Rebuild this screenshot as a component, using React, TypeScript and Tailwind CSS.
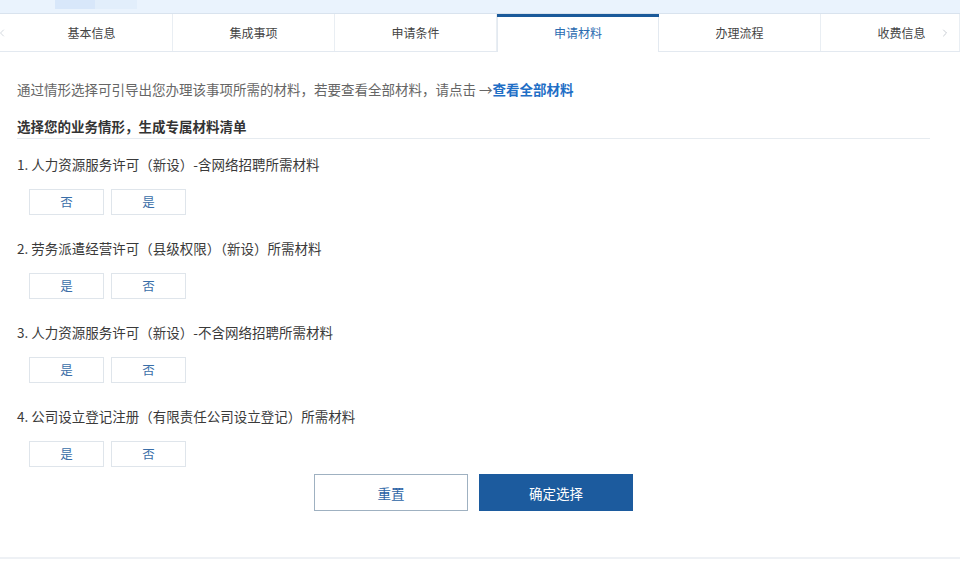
import { ChevronLeft, ChevronRight } from "lucide-react";

const tabs = ["基本信息", "集成事项", "申请条件", "申请材料", "办理流程", "收费信息"];
const activeTab = 3;

const items: { title: string; options: [string, string] }[] = [
  { title: "1. 人力资源服务许可（新设）-含网络招聘所需材料", options: ["否", "是"] },
  { title: "2. 劳务派遣经营许可（县级权限）（新设）所需材料", options: ["是", "否"] },
  { title: "3. 人力资源服务许可（新设）-不含网络招聘所需材料", options: ["是", "否"] },
  { title: "4. 公司设立登记注册（有限责任公司设立登记）所需材料", options: ["是", "否"] },
];

function TabBar() {
  return (
    <div className="flex h-[38px] border-b border-[#e3e9f0] bg-white">
      <div className="flex w-[11px] shrink-0 items-center overflow-hidden text-[#c4cbd3]">
        <ChevronLeft className="-ml-1 h-3 w-3 shrink-0" strokeWidth={1.5} />
      </div>
      {tabs.map((t, i) => {
        const active = i === activeTab;
        const last = i === tabs.length - 1;
        return (
          <div
            key={t}
            className={`relative flex items-center justify-center text-[12px] ${
              last ? "min-w-0 flex-1 pl-[23px]" : "w-[162px] shrink-0"
            } ${
              active
                ? "-mb-px border-x border-[#e3e9f0] bg-white text-[#2a6bb0]"
                : "border-r border-[#e9eef3] text-[#444]"
            }`}
          >
            {active && <div className="absolute -left-px -right-px top-0 h-[3px] bg-[#1b5a9a]" />}
            {t}
            {last && (
              <ChevronRight
                className="absolute right-[8px] top-1/2 h-3 w-3 -translate-y-1/2 text-[#b5bcc4]"
                strokeWidth={1.5}
              />
            )}
          </div>
        );
      })}
    </div>
  );
}

function Choice({ label }: { label: string }) {
  return (
    <button className="h-[26px] w-[75px] border border-[#dfe5eb] bg-white text-[12.5px] text-[#3a6ea8]">
      {label}
    </button>
  );
}

export default function App() {
  return (
    <div className="h-[570px] w-[960px] overflow-hidden bg-white font-['Noto_Sans_CJK_SC','Liberation_Sans',sans-serif]">
      <div className="flex h-[14px] border-b border-[#d9e3ee] bg-[#eaf3fd]">
        <div className="ml-[55px] h-[9px] w-[40px] bg-[#d8e7fa]" />
        <div className="h-[9px] w-[42px] bg-[#e2eefb]" />
      </div>
      <TabBar />
      <div className="px-[17px] text-[13.5px] leading-[20px]">
        <p className="mt-[27px] text-[#666]">
          通过情形选择可引导出您办理该事项所需的材料，若要查看全部材料，请点击 →
          <span className="font-bold text-[#1f6fc6]">查看全部材料</span>
        </p>
        <div className="mt-[17px] w-[913px] border-b border-[#e6ebf0] pb-[2px] font-bold text-[#333]">
          选择您的业务情形，生成专属材料清单
        </div>
        {items.map((it, i) => (
          <div key={it.title} className={i === 0 ? "mt-[15px]" : "mt-[23px]"}>
            <div className="text-[#3a3a3a]">{it.title}</div>
            <div className="mt-[15px] ml-[12px] flex gap-[7px]">
              <Choice label={it.options[0]} />
              <Choice label={it.options[1]} />
            </div>
          </div>
        ))}
        <div className="mt-[7px] flex w-[913px] justify-center gap-[11px]">
          <button className="h-[37px] w-[154px] border border-[#9fb1c1] bg-white text-[13.5px] text-[#2b63a5]">
            重置
          </button>
          <button className="h-[37px] w-[154px] bg-[#1c5b9e] text-[13.5px] text-white">确定选择</button>
        </div>
      </div>
      <div className="mt-[46px] h-[2px] bg-[#eef1f5]" />
    </div>
  );
}
